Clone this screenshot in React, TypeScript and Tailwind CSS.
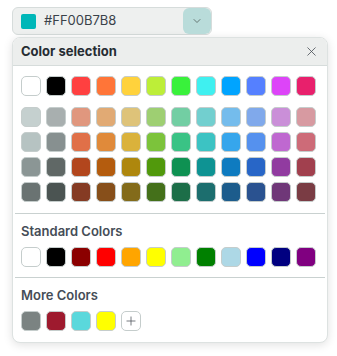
import { ChevronDown, X, Plus } from "lucide-react";

const topRow = ["#ffffff", "#000000", "#ff4040", "#ff7538", "#ffd23c", "#bdee38", "#39f13b", "#3ff0f0", "#00a4ff", "#5580ff", "#dd44f8", "#e8206c"];

const shades = [
  ["#c5d0cf", "#a8afaf", "#e0977e", "#e1aa74", "#dec379", "#9ecf72", "#72cea3", "#72cfcf", "#74bcec", "#80a9eb", "#ca8fd8", "#d79aa1"],
  ["#b6c3c2", "#879090", "#e07048", "#e08a3a", "#dab23b", "#7cc33b", "#3ac385", "#3cc3c3", "#36a6ec", "#5591ee", "#bf68d0", "#cd6b78"],
  ["#8b9695", "#606866", "#b2461d", "#b45c0e", "#ae870d", "#51990c", "#0e9152", "#0e9393", "#0e7bc0", "#2866c7", "#913ba0", "#a1404e"],
  ["#6a7372", "#4b5452", "#853b23", "#874f1a", "#836b1a", "#44701a", "#1c6e48", "#1c6e6e", "#1c5c8c", "#2a5290", "#6f3778", "#7a3c44"],
];

const standard = ["#ffffff", "#000000", "#8b0000", "#ff0000", "#ffa500", "#ffff00", "#90ee90", "#008000", "#add8e6", "#0000ff", "#000080", "#800080"];

const more = ["#7b8382", "#9e1a2e", "#5ad8dc", "#ffff00"];

function Swatch({ color }: { color: string }) {
  return (
    <button
      className="w-5 h-5 rounded-[5px] border border-[#c5cdcc] shrink-0"
      style={{ backgroundColor: color }}
    />
  );
}

function Row({ colors }: { colors: string[] }) {
  return (
    <div className="flex gap-[5px]">
      {colors.map((c, i) => (
        <Swatch key={i} color={c} />
      ))}
    </div>
  );
}

export default function App() {
  return (
    <div className="min-h-screen bg-white pt-[7px] pl-3 font-['Inter',sans-serif] text-[#2b323a]">
      <div className="flex w-[200px] h-7 rounded-md border border-[#d6dcdb] bg-[#eef0ef] overflow-hidden">
        <div className="flex-1 flex items-center gap-2 pl-2">
          <div className="w-[15px] h-[15px] rounded-[2px] bg-[#00b7b8]" />
          <span className="text-[13px] text-[#3a424a]">#FF00B7B8</span>
        </div>
        <button className="w-7 h-full bg-[#b9dcda] flex items-center justify-center rounded-md">
          <ChevronDown size={12} strokeWidth={1.5} className="text-[#4a5552]" />
        </button>
      </div>

      <div className="mt-[2px] w-[316px] rounded-lg border border-[#dde2e1] bg-white shadow-[0_2px_10px_rgba(0,0,0,0.12)] overflow-hidden">
        <div className="h-7 flex items-center justify-between px-2 bg-[#eceeed] border-b border-[#d6dcdb]">
          <span className="text-[13px] font-bold text-[#262c33]">Color selection</span>
          <X size={15} strokeWidth={1.3} className="text-[#4a5057]" />
        </div>

        <div className="px-2 pt-[10px] pb-[11px] border-b border-[#c9d1d0] mx-[2px]">
          <div className="-mx-[2px]">
            <Row colors={topRow} />
            <div className="mt-[11px] flex flex-col gap-[5px]">
              {shades.map((r, i) => (
                <Row key={i} colors={r} />
              ))}
            </div>
          </div>
        </div>

        <div className="px-2 pt-[9px] pb-[10px] border-b border-[#c9d1d0] mx-[2px]">
          <div className="-mx-[2px]">
            <div className="text-[13px] font-semibold text-[#454d57] mb-[8px] leading-4">Standard Colors</div>
            <Row colors={standard} />
          </div>
        </div>

        <div className="px-2 pt-[9px] pb-[11px]">
          <div className="text-[13px] font-semibold text-[#454d57] mb-[8px] leading-4">More Colors</div>
          <div className="flex gap-[5px]">
            {more.map((c, i) => (
              <Swatch key={i} color={c} />
            ))}
            <button className="w-5 h-5 rounded-[5px] border border-[#c5cdcc] bg-white flex items-center justify-center">
              <Plus size={14} strokeWidth={1.3} className="text-[#4a5057]" />
            </button>
          </div>
        </div>
      </div>
    </div>
  );
}
